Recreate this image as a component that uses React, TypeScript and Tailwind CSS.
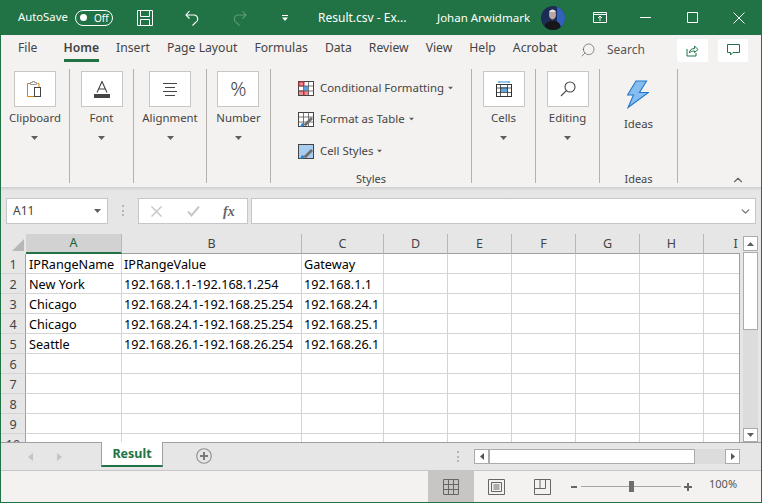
import React from "react";
import { ChevronDown, ChevronUp, Search } from "lucide-react";

const font = "font-['Noto_Sans','Open_Sans',sans-serif]";

const columns = [
  { name: "A", width: "w-[96px]" },
  { name: "B", width: "w-[180px]" },
  { name: "C", width: "w-[82px]" },
  { name: "D", width: "w-[64px]" },
  { name: "E", width: "w-[64px]" },
  { name: "F", width: "w-[64px]" },
  { name: "G", width: "w-[64px]" },
  { name: "H", width: "w-[64px]" },
  { name: "I", width: "w-[64px]" },
];

const rows = [
  ["IPRangeName", "IPRangeValue", "Gateway"],
  ["New York", "192.168.1.1-192.168.1.254", "192.168.1.1"],
  ["Chicago", "192.168.24.1-192.168.25.254", "192.168.24.1"],
  ["Chicago", "192.168.24.1-192.168.25.254", "192.168.25.1"],
  ["Seattle", "192.168.26.1-192.168.26.254", "192.168.26.1"],
  [],
  [],
  [],
  [],
  [],
];

const tabs = ["File", "Home", "Insert", "Page Layout", "Formulas", "Data", "Review", "View", "Help", "Acrobat"];

function Caret({ className = "" }: { className?: string }) {
  return (
    <svg width="7" height="4" viewBox="0 0 7 4" className={className}>
      <path d="M0 0h7L3.500 4z" fill="#5f5f5f" />
    </svg>
  );
}

function ClipboardIcon() {
  return (
    <svg width="15" height="16" viewBox="0 0 15 16" fill="none">
      <path d="M3 2.500H.5v13H7" stroke="#e08000" />
      <path d="M10.500 2.500h1.500V6" stroke="#e08000" />
      <path d="M3.500 3.500v-2h2V.5h2v1h2v2z" fill="#fff" stroke="#999" />
      <rect x="7.500" y="6.500" width="6" height="9" fill="#fff" stroke="#444" />
    </svg>
  );
}

function FontIcon() {
  return (
    <svg width="16" height="17" viewBox="0 0 16 17" fill="none">
      <path d="M3 11.500 8 .5l5 11M4.800 8h6.400" stroke="#444" strokeWidth="1.100" />
      <rect y="13" width="16" height="4" fill="#444" />
    </svg>
  );
}

function AlignIcon() {
  return (
    <svg width="14" height="13" viewBox="0 0 14 13" stroke="#444">
      <path d="M0 .5h14M2 4.500h10M0 8.500h14M2 12.500h10" />
    </svg>
  );
}

function EditingIcon() {
  return (
    <svg width="16" height="16" viewBox="0 0 16 16" fill="none" stroke="#444" strokeWidth="1.100">
      <circle cx="10" cy="6" r="5" />
      <path d="m6.300 9.700-5.300 5.300" />
    </svg>
  );
}

function CellsIcon() {
  return (
    <svg width="16" height="16" viewBox="0 0 16 16" fill="none">
      <path d="M3 1h10M3 0v2M13 0v2" stroke="#2f8fd8" />
      <rect x=".5" y="3.500" width="15" height="12" fill="#fff" stroke="#333" />
      <rect x="4" y="6" width="8" height="5" fill="#63a8e0" />
      <path d="M.5 7h15M.5 11.500h15M4.500 3.500v12M11.500 3.500v12" stroke="#333" strokeWidth=".8" />
    </svg>
  );
}

function BigButton({ label, children }: { label: string; children: React.ReactNode }) {
  return (
    <div className="flex flex-col items-center">
      <div className="flex h-[36px] w-[42px] items-center justify-center border border-[#c6c6c6] bg-white">{children}</div>
      <div className="mt-[2px] text-[11.400px] leading-[18px] text-[#444]">{label}</div>
      <Caret className="mt-[9px]" />
    </div>
  );
}

function Group({ width, children }: { width: string; children: React.ReactNode }) {
  return <div className={`${width} relative flex h-[114px] shrink-0 justify-center border-r border-[#b3b0ad] pt-[2px]`}>{children}</div>;
}

function GroupLabel({ children }: { children: React.ReactNode }) {
  return <span className="absolute bottom-[-4px] left-0 right-0 text-center text-[11px] text-[#444]">{children}</span>;
}

function StyleRow({ label, icon }: { label: string; icon: React.ReactNode }) {
  return (
    <div className="flex h-[20px] items-center">
      <span className="flex w-[22px] items-center">{icon}</span>
      <span className="text-[11.400px] text-[#444]">{label}</span>
      <Caret className="ml-[3px] scale-75" />
    </div>
  );
}

function GridIcon({ fill }: { fill: "cf" | "table" | "style" }) {
  return (
    <svg width="16" height="15" viewBox="0 0 16 15" fill="none">
      <rect x=".5" y=".5" width="15" height="14" fill={fill === "style" ? "#a9cdf0" : "#fff"} stroke="#444" />
      {fill === "cf" && <path d="M1 1h5v4H1zM1 10h10v4H1z" fill="#f08a90" />}
      {fill === "cf" && <path d="M1 1h5v4H1zM1 10h5v4" stroke="#d8262c" />}
      {fill === "cf" && <path d="M6 5h4v5H6z" fill="#5aa2de" />}
      {fill !== "style" && <path d="M.5 5h15M.5 10h15M5.500.5v14M10.500.5v14" stroke="#555" strokeWidth=".8" />}
      {fill !== "cf" && <path d="M5 13 13 5l2 2-7 7z" fill="#6f6f6f" />}
      {fill !== "cf" && <path d="M2 14.500c2 .5 4 0 4-2.500L4 11z" fill="#2f83cc" />}
    </svg>
  );
}

function TitleBar() {
  return (
    <div className="flex h-[35px] shrink-0 items-center bg-[#217346] pl-[17px] text-white">
      <span className="w-[57px] text-[11.300px]">AutoSave</span>
      <div className="flex h-[16px] w-[38px] items-center rounded-full border border-white pl-[4px]">
        <span className="h-[7px] w-[7px] rounded-full bg-white" />
        <span className="ml-[7px] text-[10px] leading-none">Off</span>
      </div>
      <svg width="16" height="16" viewBox="0 0 16 16" fill="none" stroke="#fff" className="ml-[24px]">
        <path d="M.5.500h15v15H.5zM3.500.500v6h9v-6M3.500 15.500v-6h9v6" />
      </svg>
      <svg width="15" height="16" viewBox="0 0 15 16" fill="none" stroke="#fff" strokeWidth="1.100" className="ml-[32px]">
        <path d="M1 5h8.500a4 4 0 0 1 1 7.500L7.500 15.500M4.500 1 1 5l3.500 3.500" />
      </svg>
      <svg width="15" height="16" viewBox="0 0 15 16" fill="none" stroke="#5c9a78" strokeWidth="1.100" className="ml-[32px]">
        <path d="M14 5H5.500a4 4 0 0 0-1 7.500l3 3M10.500 1 14 5l-3.500 3.500" />
      </svg>
      <svg width="6" height="6" viewBox="0 0 6 6" className="ml-[35px]">
        <path d="M0 0h6v1H0zM0 2.500h6L3 6z" fill="#fff" />
      </svg>
      <span className="ml-[30px] w-[119px] text-[12px]">Result.csv - Ex...</span>
      <span className="w-[104px] text-[11.500px]">Johan Arwidmark</span>
      <svg width="24" height="24" viewBox="0 0 24 24">
        <defs>
          <clipPath id="avatar">
            <circle cx="12" cy="12" r="12" />
          </clipPath>
        </defs>
        <g clipPath="url(#avatar)">
          <rect width="24" height="24" fill="#1d2c55" />
          <rect x="16" width="8" height="24" fill="#2f62b8" />
          <path d="M3 24c0-7 4-9 9-9s8 2 8 9z" fill="#17171b" />
          <ellipse cx="11.500" cy="8.500" rx="3.500" ry="5" fill="#b9a7a6" />
          <path d="M8 6c1-3 6-3 7 0z" fill="#e4e0e4" />
        </g>
      </svg>
      <svg width="14" height="11" viewBox="0 0 14 11" fill="none" stroke="#fff" className="ml-[28px]">
        <path d="M.5.500h13v10H.5zM.5 2.500h13M7 9V4M5 6l2-2 2 2" />
      </svg>
      <svg width="11" height="11" viewBox="0 0 11 11" stroke="#fff" className="ml-[33px]">
        <path d="M0 5.500h11" />
      </svg>
      <svg width="11" height="11" viewBox="0 0 11 11" fill="none" stroke="#fff" className="ml-[36px]">
        <path d="M.5.500h10v10H.5z" />
      </svg>
      <svg width="12" height="12" viewBox="0 0 12 12" stroke="#fff" className="ml-[35px]">
        <path d="m.5.500 11 11M11.500.500l-11 11" />
      </svg>
    </div>
  );
}

function TabRow() {
  return (
    <div className="flex h-[30px] shrink-0 items-center pl-[17px] pr-[13px]">
      <div className="flex h-full w-[543px] shrink-0 gap-[17px]">
        {tabs.map((tab) => (
          <div
            key={tab}
            className={`${tab === "File" ? "mr-[9px]" : ""} ${tab === "Home" ? "border-b-[3px] border-[#217346] font-semibold" : "pb-[3px]"} flex h-[27px] shrink-0 items-center whitespace-nowrap pt-[3px] text-[12.200px] text-[#444]`}
          >
            {tab}
          </div>
        ))}
      </div>
      <Search size={16} strokeWidth={1} className="ml-[19px] -scale-x-100 text-[#555]" />
      <span className="ml-[11px] text-[12px] text-[#555]">Search</span>
      <div className="ml-auto flex h-[23px] w-[31px] items-center justify-center rounded-[2px] bg-white">
        <svg width="13" height="13" viewBox="0 0 13 13" fill="none" stroke="#217346">
          <path d="M1 5v7h9V9M3.500 9c0-3 2-4.500 5-4.500V2L12 5.500 8.500 8.500V7C6 7 4.500 7.500 3.500 9z" />
        </svg>
      </div>
      <div className="ml-[10px] flex h-[23px] w-[30px] items-center justify-center rounded-[2px] bg-white">
        <svg width="13" height="12" viewBox="0 0 13 12" fill="none" stroke="#217346">
          <path d="M.5.500h12v8H6L3.500 11V8.500H.5z" />
        </svg>
      </div>
    </div>
  );
}

function Ribbon() {
  return (
    <div className="flex h-[122px] shrink-0 pt-[4px]">
      <Group width="w-[69px]">
        <BigButton label="Clipboard"><ClipboardIcon /></BigButton>
      </Group>
      <Group width="w-[64px]">
        <BigButton label="Font"><FontIcon /></BigButton>
      </Group>
      <Group width="w-[73px]">
        <BigButton label="Alignment"><AlignIcon /></BigButton>
      </Group>
      <Group width="w-[64px]">
        <BigButton label="Number"><span className="text-[20px] font-light leading-none text-[#444]">%</span></BigButton>
      </Group>
      <Group width="w-[201px]">
        <div className="flex w-full flex-col pl-[27px] pt-[7px]">
          <div className="flex flex-col gap-[11px]">
            <StyleRow label="Conditional Formatting" icon={<GridIcon fill="cf" />} />
            <StyleRow label="Format as Table" icon={<GridIcon fill="table" />} />
            <div className="mt-[1px]">
              <StyleRow label="Cell Styles" icon={<GridIcon fill="style" />} />
            </div>
          </div>
        </div>
        <GroupLabel>Styles</GroupLabel>
      </Group>
      <Group width="w-[64px]">
        <BigButton label="Cells"><CellsIcon /></BigButton>
      </Group>
      <Group width="w-[64px]">
        <BigButton label="Editing"><EditingIcon /></BigButton>
      </Group>
      <Group width="w-[78px]">
        <div className="flex flex-col items-center pt-[9px]">
          <svg width="22" height="29" viewBox="0 0 22 29">
            <path d="M9 1h10.500l-7 11.500h9L1 27.500 6.500 15H.5z" fill="#85bdf0" stroke="#1f78c8" strokeWidth="1.100" />
          </svg>
          <span className="mt-[6px] text-[11.400px] text-[#444]">Ideas</span>
        </div>
        <GroupLabel>Ideas</GroupLabel>
      </Group>
      <div className="flex h-[118px] flex-1 items-end justify-end pr-[16px]">
        <ChevronUp size={14} strokeWidth={2} className="text-[#666]" />
      </div>
    </div>
  );
}

function FormulaBar() {
  return (
    <div className="flex h-[47px] shrink-0 items-start bg-[#e6e6e6] bg-gradient-to-b from-[#cfcfcf] from-0% to-[#e6e6e6] to-[8%] pl-[5px] pt-[11px]">
      <div className="flex h-[26px] w-[102px] items-center justify-between border border-[#c6c6c6] bg-white pl-[6px] pr-[6px] text-[12px] text-[#444]">
        A11
        <Caret />
      </div>
      <div className="ml-[14px] mt-[7px] flex h-[11px] w-[2px] flex-col justify-between">
        <span className="h-[2px] w-[2px] bg-[#b5b5b5]" />
        <span className="h-[2px] w-[2px] bg-[#b5b5b5]" />
        <span className="h-[2px] w-[2px] bg-[#b5b5b5]" />
      </div>
      <div className="ml-[14px] flex h-[26px] w-[110px] items-center border border-[#c6c6c6] bg-white pl-[12px] text-[#c8c8c8]">
        <svg width="11" height="11" viewBox="0 0 11 11" stroke="#c8c8c8" strokeWidth="1.500">
          <path d="m.5.500 10 10M10.500.500l-10 10" />
        </svg>
        <svg width="13" height="11" viewBox="0 0 13 11" fill="none" stroke="#c8c8c8" strokeWidth="2" className="ml-[25px]">
          <path d="m1 5.500 3.500 4 7.500-9" />
        </svg>
        <span className="ml-[23px] font-['Liberation_Serif',serif] text-[14px] font-bold italic text-[#666]">fx</span>
      </div>
      <div className="ml-[3px] flex h-[26px] w-[505px] items-center justify-end border border-[#c6c6c6] bg-white pr-[3px]">
        <ChevronDown size={13} strokeWidth={2.500} className="text-[#777]" />
      </div>
    </div>
  );
}

function SheetGrid() {
  return (
    <div className="relative flex h-[208px] w-[739px] shrink-0 flex-col overflow-hidden">
      <div className="flex h-[20px] shrink-0">
        <div className="flex w-[25px] shrink-0 items-end justify-end pb-[3px] pr-[2px]">
          <svg width="12" height="12" viewBox="0 0 12 12">
            <path d="M12 0v12H0z" fill="#b7b7b7" />
          </svg>
        </div>
        {columns.map((col) => (
          <div
            key={col.name}
            className={`${col.width} ${col.name === "A" ? "border-b-2 border-b-[#217346] bg-[#d2d2d2] text-[#17633c]" : "border-b border-b-[#9f9f9f] text-[#444]"} flex shrink-0 items-center justify-center border-r border-r-[#b8b8b8] pt-[1px] text-[12.500px]`}
          >
            {col.name}
          </div>
        ))}
      </div>
      {rows.map((row, i) => (
        <div key={i} className="flex h-[20px] shrink-0">
          <div className="flex w-[25px] shrink-0 items-center justify-center border-r border-r-[#9f9f9f] border-b border-b-[#d4d4d4] pt-[2px] text-[12.650px] text-[#444]">
            {i + 1}
          </div>
          {columns.map((col, c) => (
            <div
              key={col.name}
              className={`${col.width} ${c === 0 ? "pl-[3px]" : "pl-[2px]"} flex shrink-0 items-center overflow-hidden whitespace-nowrap border-r border-b border-[#d4d4d4] bg-white pt-[2px] text-[12.650px] text-black`}
            >
              {row[c]}
            </div>
          ))}
        </div>
      ))}
      <div className="absolute bottom-0 right-0 top-[19px] w-[1px] bg-[#9f9f9f]" />
    </div>
  );
}

function VerticalScroll() {
  return (
    <div className="ml-[3px] flex w-[15px] shrink-0 flex-col pt-[2px]">
      <div className="flex h-[15px] items-center justify-center border border-[#ababab] bg-white">
        <Caret className="rotate-180" />
      </div>
      <div className="mt-[1px] h-[78px] border border-[#ababab] bg-white" />
      <div className="flex-1 bg-[#dcdcdc]" />
      <div className="flex h-[14px] items-center justify-center border border-[#ababab] bg-white">
        <Caret />
      </div>
    </div>
  );
}

function SheetTabs() {
  return (
    <div className="flex h-[28px] shrink-0 border-t border-[#9f9f9f] bg-[#e6e6e6]">
      <div className="flex w-[100px] items-center pl-[27px]">
        <svg width="5" height="8" viewBox="0 0 5 8"><path d="M5 0v8L0 4z" fill="#c4c4c4" /></svg>
        <svg width="5" height="8" viewBox="0 0 5 8" className="ml-[24px]"><path d="M0 0v8l5-4z" fill="#c4c4c4" /></svg>
      </div>
      <div className="-mt-[1px] flex h-[25px] w-[62px] items-center justify-center border-x border-x-[#9f9f9f] border-b-[2px] border-b-[#217346] bg-white pt-[2px] text-[12.500px] font-bold text-[#217346]">
        Result
      </div>
      <svg width="16" height="16" viewBox="0 0 16 16" fill="none" className="ml-[33px] mt-[5px]">
        <circle cx="8" cy="8" r="7.300" stroke="#8f8f8f" strokeWidth="1.100" />
        <path d="M8 4v8M4 8h8" stroke="#7a7a7a" strokeWidth="2" />
      </svg>
      <div className="ml-[245px] mt-[8px] flex h-[11px] w-[2px] flex-col justify-between">
        <span className="h-[2px] w-[2px] bg-[#b5b5b5]" />
        <span className="h-[2px] w-[2px] bg-[#b5b5b5]" />
        <span className="h-[2px] w-[2px] bg-[#b5b5b5]" />
      </div>
      <div className="ml-[15px] mt-[6px] flex h-[15px] w-[266px]">
        <div className="flex w-[15px] items-center justify-center border border-[#ababab] bg-white">
          <svg width="4" height="7" viewBox="0 0 4 7"><path d="M4 0v7L0 3.500z" fill="#555" /></svg>
        </div>
        <div className="w-[206px] border border-[#ababab] bg-white" />
        <div className="flex-1 bg-[#dcdcdc]" />
        <div className="flex w-[15px] items-center justify-center border border-[#ababab] bg-white">
          <svg width="4" height="7" viewBox="0 0 4 7"><path d="M0 0v7l4-3.500z" fill="#555" /></svg>
        </div>
      </div>
    </div>
  );
}

function StatusBar() {
  return (
    <div className="flex min-h-0 flex-1 items-center border-t border-[#c6c6c6] pl-[427px]">
      <div className="flex h-full w-[46px] items-center justify-center bg-[#c8c6c4]">
        <svg width="16" height="16" viewBox="0 0 16 16" fill="none" stroke="#666">
          <path d="M.5.500h15v15H.5zM.5 5.500h15M.5 10.500h15M5.500.500v15M10.500.500v15" />
        </svg>
      </div>
      <svg width="17" height="16" viewBox="0 0 17 16" fill="none" stroke="#666" className="ml-[14px]">
        <path d="M.5.500h16v15H.5zM3.500 3.500h10v9h-10zM5.500 6h6M5.500 8h6M5.500 10h6" />
      </svg>
      <svg width="17" height="16" viewBox="0 0 17 16" fill="none" stroke="#666" className="ml-[29px]">
        <path d="M.5.500h16v15H.5zM.5 9.500h11v-9M6 .5v9" />
      </svg>
      <span className="ml-[20px] h-[2px] w-[6px] bg-[#666]" />
      <div className="relative ml-[4px] h-[1px] w-[100px] bg-[#a5a5a5]">
        <span className="absolute left-[48px] top-[-5px] h-[11px] w-[5px] bg-[#6e6e6e]" />
      </div>
      <svg width="8" height="8" viewBox="0 0 8 8" className="ml-[3px]">
        <path d="M3 0h2v3h3v2H5v3H3V5H0V3h3z" fill="#666" />
      </svg>
      <span className="ml-[17px] -mt-[4px] text-[11px] text-[#555]">100%</span>
    </div>
  );
}

export default function App() {
  return (
    <div className={`${font} flex h-[503px] w-[762px] flex-col overflow-hidden border-x border-b border-[#217346] bg-[#f3f2f1]`}>
      <TitleBar />
      <TabRow />
      <Ribbon />
      <FormulaBar />
      <div className="flex h-[208px] shrink-0 bg-[#e6e6e6]">
        <SheetGrid />
        <VerticalScroll />
      </div>
      <SheetTabs />
      <StatusBar />
    </div>
  );
}
